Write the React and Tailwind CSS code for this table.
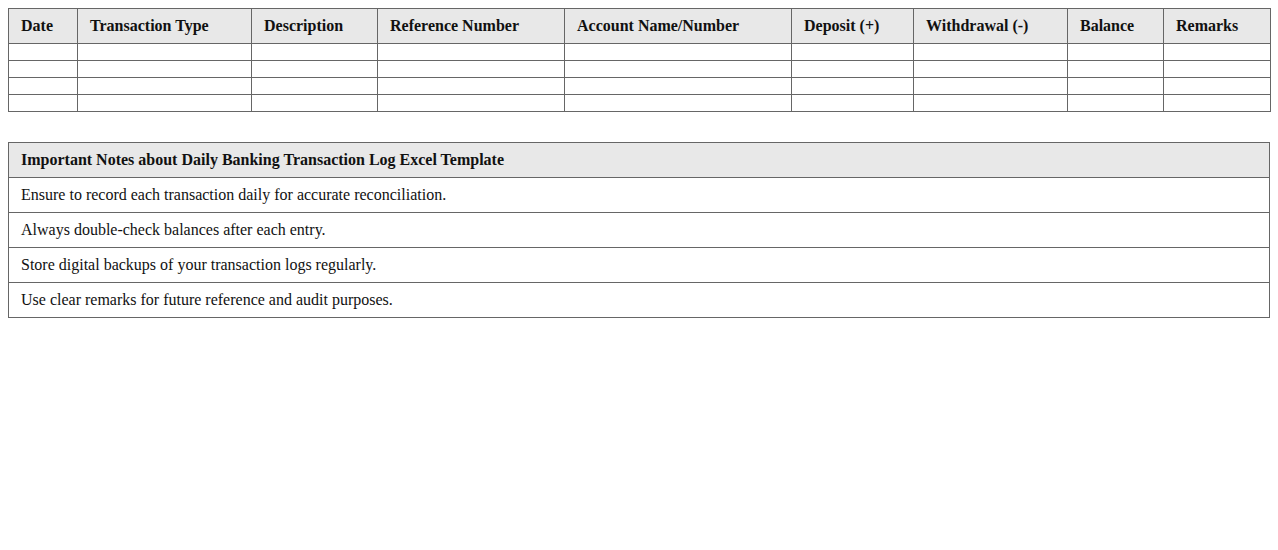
import React from "react";

const columns = [
  { label: "Date", w: "w-[69px]" },
  { label: "Transaction Type", w: "w-[174px]" },
  { label: "Description", w: "w-[126px]" },
  { label: "Reference Number", w: "w-[187px]" },
  { label: "Account Name/Number", w: "w-[227px]" },
  { label: "Deposit (+)", w: "w-[122px]" },
  { label: "Withdrawal (-)", w: "w-[154px]" },
  { label: "Balance", w: "w-[96px]" },
  { label: "Remarks", w: "w-[107px]" },
];

const notes = [
  "Ensure to record each transaction daily for accurate reconciliation.",
  "Always double-check balances after each entry.",
  "Store digital backups of your transaction logs regularly.",
  "Use clear remarks for future reference and audit purposes.",
];

export default function App() {
  return (
    <div className="p-2 bg-white text-[16px] text-[#111] font-['Liberation_Serif',serif]">
      {/* Transaction log */}
      <table className="w-full table-fixed border-collapse border border-[#666]">
        <colgroup>
          {columns.map((c) => (
            <col key={c.label} className={c.w} />
          ))}
        </colgroup>
        <thead>
          <tr className="bg-[#e8e8e8]">
            {columns.map((c) => (
              <th
                key={c.label}
                className="border border-[#666] px-3 py-2 text-left font-bold leading-[18px] whitespace-nowrap"
              >
                {c.label}
              </th>
            ))}
          </tr>
        </thead>
        <tbody>
          {[0, 1, 2, 3].map((r) => (
            <tr key={r}>
              {columns.map((c) => (
                <td key={c.label} className="border border-[#666] px-3 py-2 h-[17px]"></td>
              ))}
            </tr>
          ))}
        </tbody>
      </table>

      {/* Notes */}
      <table className="w-full mt-[30px] border-collapse border border-[#666]">
        <thead>
          <tr className="bg-[#e8e8e8]">
            <th className="border border-[#666] px-3 py-2 text-left font-bold leading-[18px]">
              Important Notes about Daily Banking Transaction Log Excel Template
            </th>
          </tr>
        </thead>
        <tbody>
          {notes.map((n) => (
            <tr key={n}>
              <td className="border border-[#666] px-3 py-2 leading-[18px]">{n}</td>
            </tr>
          ))}
        </tbody>
      </table>
    </div>
  );
}
